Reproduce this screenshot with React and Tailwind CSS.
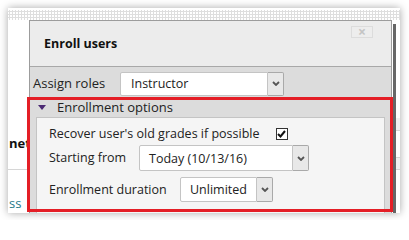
import React from 'react';

function Chevron() {
  return (
    <svg width="8" height="5" viewBox="0 0 8 5" className="block">
      <polyline points="1,1 4,4 7,1" fill="none" stroke="#555" strokeWidth="1.8" />
    </svg>
  );
}

function Select({ value, width, height = 'h-[24px]', pad = 'pl-[10px]' }) {
  return (
    <div className={`flex ${height}`}>
      <div
        className={`${width} ${pad} flex items-center pt-[2px] bg-white border border-[#c4c4c4] rounded-l-[2px] text-[#222]`}
      >
        {value}
      </div>
      <div className="w-[16px] flex items-center justify-center bg-[#e8e8e8] border border-l-0 border-[#a9a9a9] rounded-r-[2px]">
        <Chevron />
      </div>
    </div>
  );
}

export default function App() {
  return (
    <div className="w-[409px] h-[220px] bg-white pt-[8px] pl-[8px]" style={{ fontFamily: '"Open Sans", "Noto Sans", sans-serif' }}>
      <div className="relative w-[392px] h-[205px] bg-white overflow-hidden shadow-[0_0_8px_rgba(0,0,0,0.35)] text-[12.5px]">
        {/* page behind the dialog */}
        <div className="h-[2px]" />
        <div className="h-[10px] bg-[radial-gradient(#dedede_1px,transparent_1.2px)] bg-[length:3px_3px]" />
        <div className="h-[98px]" />
        <div className="flex h-[13px]">
          <div className="flex-1" />
          <div className="w-[4px] bg-[#f1f1f1] border-b border-[#d6d6d6]" />
        </div>
        <div className="flex h-[39px] border-b border-[#d6d6d6]">
          <div className="flex-1 pl-[1px] pt-[3px] font-bold text-[13px] text-[#111]">net</div>
          <div className="w-[4px] flex flex-col justify-end">
            <div className="h-[12px] bg-[#f1f1f1] border-t border-[#d6d6d6]" />
          </div>
        </div>
        <div className="pl-[1px] pt-[24px] text-[13px] text-[#1d7888]">ss</div>

        {/* dialog */}
        <div className="absolute left-[21px] top-[12px] w-[363px] bottom-0 border border-b-0 border-[#9c9c9c] bg-[#dcdcdc]">
          <div className="flex justify-between h-[46px] bg-[#ececec] border-b border-[#a8a8a8] pl-[14px] pr-[18px]">
            <div className="self-center font-bold text-[12.5px] text-[#111] pt-[1px]">Enroll users</div>
            <div className="mt-[5px] w-[22px] h-[12px] flex items-center justify-center border border-[#dcdcdc] bg-[#ededed] text-[#c4c4c4] text-[14px] font-bold leading-none">
              ×
            </div>
          </div>

          <div className="flex items-center pl-[3px] pt-[4px] h-[29px]">
            <div className="w-[87px] text-[#222] text-[13px] pt-[1px]">Assign roles</div>
            <Select value="Instructor" width="w-[148px]" />
          </div>

          <div className="flex items-center h-[21px] pl-[8px] pt-[2px]">
            <svg width="8" height="5" viewBox="0 0 8 5" className="mr-[11px]">
              <polygon points="0,0 8,0 4,5" fill="#4b2a73" />
            </svg>
            <span className="text-[#222] text-[13px] pt-[1px]">Enrollment options</span>
          </div>

          <div className="mx-[6px] h-[100px] border border-[#c4c4c4] bg-[#f5f5f5] pl-[12px] text-[#222]">
            <div className="flex items-center h-[28px] pt-[3px]">
              <span className="pt-[1px]">Recover user's old grades if possible</span>
              <div className="ml-[16px] w-[12px] h-[12px] border border-[#333] bg-white flex items-center justify-center">
                <svg width="9" height="8" viewBox="0 0 9 8">
                  <polyline points="1,4 3.5,6.5 8,1" fill="none" stroke="#111" strokeWidth="2" />
                </svg>
              </div>
            </div>
            <div className="flex items-center mt-[-1px]">
              <span className="w-[90px] pt-[1px]">Starting from</span>
              <Select value="Today (10/13/16)" width="w-[154px]" height="h-[26px]" pad="pl-[9px]" />
            </div>
            <div className="flex items-center mt-[6px]">
              <span className="w-[131px] pt-[1px]">Enrollment duration</span>
              <Select value="Unlimited" width="w-[77px]" height="h-[25px]" pad="pl-[9px]" />
            </div>
          </div>
        </div>

        {/* dialog scrollbar */}
        <div className="absolute left-[385px] top-[16px] w-[3px] bottom-0 bg-[#666]" />

        {/* annotation */}
        <div className="absolute left-[19px] top-[89px] w-[366px] h-[115px] border-[3px] border-[#e41e26]" />
      </div>
    </div>
  );
}
